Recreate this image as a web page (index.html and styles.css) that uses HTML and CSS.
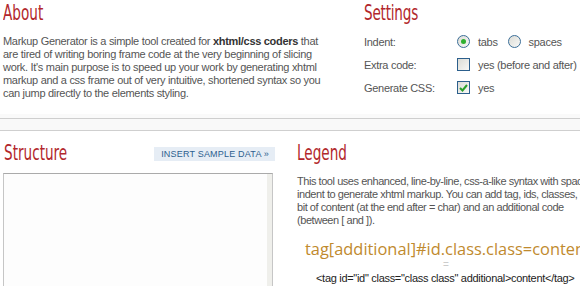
FILE: index.html
```html
<!DOCTYPE html>
<html lang="en">
<head>
    <meta charset="UTF-8">
    <title>Markup Generator</title>
    <link rel="stylesheet" href="styles.css">
</head>
<body>
    <div class="page">
        <div class="top">
            <div class="about">
                <h2 class="title">About</h2>
                <p class="text">Markup Generator is a simple tool created for <b>xhtml/css coders</b> that<br>
                are tired of writing boring frame code at the very beginning of slicing<br>
                work. It's main purpose is to speed up your work by generating xhtml<br>
                markup and a css frame out of very intuitive, shortened syntax so you<br>
                can jump directly to the elements styling.</p>
            </div>
            <div class="settings">
                <h2 class="title">Settings</h2>
                <div class="opts">
                    <span class="lbl">Indent:</span>
                    <span class="ctl">
                        <label class="opt"><i class="radio on"></i>tabs</label>
                        <label class="opt"><i class="radio"></i>spaces</label>
                    </span>
                    <span class="lbl">Extra code:</span>
                    <span class="ctl">
                        <label class="opt"><i class="check"></i>yes (before and after)</label>
                    </span>
                    <span class="lbl">Generate CSS:</span>
                    <span class="ctl">
                        <label class="opt"><i class="check">
                            <svg width="9" height="8" viewBox="0 0 9 8"><path d="M1 4 L3.5 6.5 L8 1" fill="none" stroke="#2aa02a" stroke-width="2"/></svg>
                        </i>yes</label>
                    </span>
                </div>
            </div>
        </div>
        <div class="sep"></div>
        <div class="bottom">
            <div class="structure">
                <div class="head">
                    <h2 class="title">Structure</h2>
                    <a class="sample" href="javascript:;">Insert sample data &raquo;</a>
                </div>
                <div class="area"><span class="bar"></span></div>
            </div>
            <div class="legend">
                <h2 class="title">Legend</h2>
                <p class="text">This tool uses enhanced, line-by-line, css-a-like syntax with spaces<br>
                indent to generate xhtml markup. You can add tag, ids, classes, a<br>
                bit of content (at the end after = char) and an additional code<br>
                (between [ and ]).</p>
                <div class="code">tag[additional]#id.class.class=content</div>
                <div class="eq">=</div>
                <div class="out">&lt;tag id="id" class="class class" additional&gt;content&lt;/tag&gt;</div>
            </div>
        </div>
    </div>
</body>
</html>
```

FILE: styles.css
```css
*{
    margin: 0;
    padding: 0;
}
body{
    background: #fff;
    overflow: hidden;
    font-family: "Liberation Sans", Arial, sans-serif;
    font-size: 11px;
    color: #555;
}
.page{
    width: 620px;
}
.title{
    display: inline-block;
    font-family: "DejaVu Sans Condensed", "DejaVu Sans", sans-serif;
    font-stretch: condensed;
    font-weight: normal;
    font-size: 21px;
    line-height: 24px;
    color: #b2272c;
    transform: scaleX(.72);
    transform-origin: left center;
}
.text{
    line-height: 13px;
    letter-spacing: -.3px;
    white-space: nowrap;
}
.text b{
    color: #333;
}
.top{
    display: flex;
    height: 113px;
}
.about{
    width: 361px;
    padding: 1px 0 0 3px;
}
.about .text{
    margin-top: 10px;
}
.settings{
    padding-top: 1px;
    letter-spacing: -.3px;
}
.opts{
    display: grid;
    grid-template-columns: 93px auto;
    grid-auto-rows: 23px;
    margin-top: 5px;
    align-items: center;
}
.ctl{
    display: flex;
    align-items: center;
}
.opt{
    display: flex;
    align-items: center;
    margin-right: 10px;
}
.radio,.check{
    display: flex;
    align-items: center;
    justify-content: center;
    width: 11px;
    height: 11px;
    margin-right: 8px;
    background: linear-gradient(135deg, #dcdcd6, #f8f8f6);
}
.radio{
    border: 1px solid #3b6e98;
    border-radius: 50%;
}
.radio.on::after{
    content: "";
    width: 5px;
    height: 5px;
    border-radius: 50%;
    background: #2fb02f;
}
.check{
    border: 1px solid #2c5f8c;
}
.sep{
    height: 11px;
    border-top: 1px solid #cfcfcf;
    border-bottom: 1px solid #cfcfcf;
    background: #f9f9f9;
    box-shadow: 0 -4px 0 #fafafa;
    margin-top: 5px;
}
.bottom{
    display: flex;
    padding-top: 10px;
}
.structure{
    width: 270px;
    margin-left: 3px;
}
.head{
    display: flex;
    align-items: center;
    justify-content: space-between;
    padding-left: 1px;
}
.sample{
    display: block;
    background: #e6edf5;
    color: #2d5f8f;
    text-decoration: none;
    text-transform: uppercase;
    font-size: 9px;
    letter-spacing: .2px;
    line-height: 14px;
    padding: 0 6px 0 7px;
    margin-right: -2px;
    margin-top: 1px;
}
.area{
    display: flex;
    justify-content: flex-end;
    height: 130px;
    margin-top: 8px;
    border: 1px solid #c6c6c6;
    border-top-color: #aaa;
    background: #fdfdfd;
}
.bar{
    width: 5px;
    background: #efefeb;
}
.legend{
    width: 300px;
    margin-left: 24px;
}
.legend .text{
    margin-top: 10px;
    letter-spacing: -.45px;
}
.code{
    margin-top: 12px;
    margin-left: 8px;
    font-family: "Open Sans", sans-serif;
    font-size: 16.4px;
    line-height: 20px;
    color: #bf8a2e;
    white-space: nowrap;
}
.eq{
    margin-left: 146px;
    color: #ccc;
    font-size: 10px;
    line-height: 10px;
    margin-top: 1px;
}
.out{
    margin-left: 19px;
    margin-top: 2px;
    color: #222;
    white-space: nowrap;
    letter-spacing: -.3px;
}
```
